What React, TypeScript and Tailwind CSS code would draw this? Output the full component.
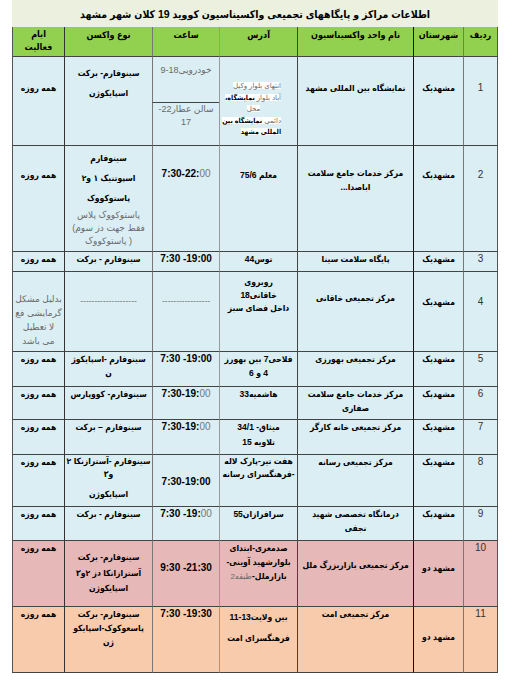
import React from 'react';

// Mashhad COVID-19 vaccination centres sheet (RTL table)

const L = ({ children }: { children: React.ReactNode }) => <span dir="ltr">{children}</span>;

const colCls = [
  'border-r border-r-[#555] border-l-[#777]', // ردیف
  'border-l-[#111]', // شهرستان
  'border-l-[#444]', // نام واحد
  'border-l-[#999]', // آدرس
  'border-l-[#777]', // ساعت
  'border-l-[#333]', // نوع واکسن
  'border-l-[#555]', // ایام
];

function Td({
  col,
  className = '',
  rowSpan,
  children,
}: {
  col: number;
  className?: string;
  rowSpan?: number;
  children?: React.ReactNode;
}) {
  return (
    <td
      rowSpan={rowSpan}
      className={`align-top p-0 text-center border-b border-l border-b-[#444] ${colCls[col]} ${className}`}
    >
      {children}
    </td>
  );
}

const Gray = ({ children, size = 'text-[9px]' }: { children: React.ReactNode; size?: string }) => (
  <span className={`font-['Liberation_Sans','DejaVu_Sans',sans-serif] font-normal text-[#6b6b6b] ${size}`}>
    {children}
  </span>
);

const Lines = ({ items, lh = 'leading-[14px]' }: { items: React.ReactNode[]; lh?: string }) => (
  <div className={lh}>
    {items.map((t, i) => (
      <div key={i}>{t}</div>
    ))}
  </div>
);

const Num = ({ children }: { children: React.ReactNode }) => (
  <span className="font-normal text-[10px] text-[#333]">{children}</span>
);

const Time = ({ children }: { children: React.ReactNode }) => (
  <span dir="ltr" className="text-[10px]">{children}</span>
);

export default function App() {
  const row = 'bg-[#daeef3]';
  return (
    <div className="w-[513px] h-[683px] bg-white px-[12px]">
      <table
        dir="rtl"
        className="w-[486px] table-fixed border-separate border-spacing-0 font-['Liberation_Sans','DejaVu_Sans_Condensed','DejaVu_Sans',sans-serif] text-[8.5px] leading-[14px] font-bold text-black"
      >
        <colgroup>
          <col className="w-[35px]" />
          <col className="w-[50px]" />
          <col className="w-[116px]" />
          <col className="w-[78px]" />
          <col className="w-[67px]" />
          <col className="w-[88px]" />
          <col className="w-[52px]" />
        </colgroup>
        <tbody>
          <tr className="h-[27px]">
            <td colSpan={7} className="bg-[#ebf1de] text-center align-middle text-[10.5px] font-bold">
              اطلاعات مراکز و پایگاههای تجمیعی واکسیناسیون کووید 19 کلان شهر مشهد
            </td>
          </tr>
          <tr className="h-[30px] bg-[#92d050] text-[9px]">
            <Td col={0} className="pt-[1px]">ردیف</Td>
            <Td col={1} className="pt-[1px]">شهرستان</Td>
            <Td col={2} className="pt-[1px]">نام واحد واکسیناسیون</Td>
            <Td col={3} className="pt-[1px]">آدرس</Td>
            <Td col={4} className="pt-[1px]">ساعت</Td>
            <Td col={5} className="pt-[1px]">نوع واکسن</Td>
            <Td col={6} className="pt-[1px]">
              <Lines items={['ایام', 'فعالیت']} lh="leading-[13px]" />
            </Td>
          </tr>

          {/* 1 */}
          <tr className={`h-[46px] ${row}`}>
            <Td col={0} rowSpan={2} className="pt-[24px]"><Num>1</Num></Td>
            <Td col={1} rowSpan={2} className="pt-[24px]">مشهدیک</Td>
            <Td col={2} rowSpan={2} className="pt-[24px]">نمایشگاه بین المللی مشهد</Td>
            <Td col={3} rowSpan={2} className="pt-[23px]">
              <div className="text-[7px] leading-[11.5px] text-right pr-[16px] whitespace-nowrap">
                <div><span className="bg-white"><Gray size="text-[7px]">انتهای بلوار وکیل</Gray></span></div>
                <div><span className="bg-white"><Gray size="text-[7px]">آباد بلوار </Gray>نمایشگاه،</span></div>
                <div className="text-center pl-[6px]"><span className="bg-white"><Gray size="text-[7px]">محل</Gray></span></div>
                <div><span className="bg-white"><Gray size="text-[7px]">دائمی </Gray>نمایشگاه بین</span></div>
                <div><span className="bg-white">المللی مشهد</span></div>
              </div>
            </Td>
            <Td col={4} className="pt-[6px]">
              <Gray>خودرویی<L>9-18</L></Gray>
            </Td>
            <Td col={5} rowSpan={2} className="pt-[6px]">
              <Lines items={['سینوفارم- برکت', 'اسپایکوژن']} lh="leading-[20px]" />
            </Td>
            <Td col={6} rowSpan={2} className="pt-[24px]">همه روزه</Td>
          </tr>
          <tr className={`h-[43px] ${row}`}>
            <Td col={4} className="pt-[0px]">
              <Gray>
                <Lines items={[<>سالن عطار<L>-22</L></>, '17']} lh="leading-[13px]" />
              </Gray>
            </Td>
          </tr>

          {/* 2 */}
          <tr className={`h-[106px] ${row}`}>
            <Td col={0} className="pt-[22px]"><Num>2</Num></Td>
            <Td col={1} className="pt-[22px]">مشهدیک</Td>
            <Td col={2} className="pt-[20px]">
              <Lines items={['مرکز خدمات جامع سلامت', 'اباصدا...']} />
            </Td>
            <Td col={3} className="pt-[22px]">معلم <L>75/6</L></Td>
            <Td col={4} className="pt-[21px]">
              <Time>7:30-22:<span className="font-normal text-[#777]">00</span></Time>
            </Td>
            <Td col={5} className="pt-[2px]">
              <Lines items={['سینوفارم', 'اسپوتنیک ۱ و۲', 'پاستوکووک']} lh="leading-[20px]" />
              <div className="mt-[1px]">
                <Gray>
                  <Lines items={['پاستوکووک پلاس', 'فقط جهت دز سوم)', '( پاستوکووک']} lh="leading-[13px]" />
                </Gray>
              </div>
            </Td>
            <Td col={6} className="pt-[22px]">همه روزه</Td>
          </tr>

          {/* 3 */}
          <tr className={`h-[20px] ${row}`}>
            <Td col={0}><Num>3</Num></Td>
            <Td col={1}>مشهدیک</Td>
            <Td col={2}>پایگاه سلامت سینا</Td>
            <Td col={3}>توس44</Td>
            <Td col={4}><Time>7:30 -19:00</Time></Td>
            <Td col={5}>سینوفارم - برکت</Td>
            <Td col={6}>همه روزه</Td>
          </tr>

          {/* 4 */}
          <tr className={`h-[80px] ${row}`}>
            <Td col={0} className="pt-[23px]"><Num>4</Num></Td>
            <Td col={1} className="pt-[23px]">مشهدیک</Td>
            <Td col={2} className="pt-[19px]">مرکز تجمیعی خاقانی</Td>
            <Td col={3} className="pt-[4px]">
              <Lines items={['روبروی', 'خاقانی18', 'داخل فضای سبز']} lh="leading-[13px]" />
            </Td>
            <Td col={4} className="pt-[22px]">
              <span className="font-normal text-[#777]">-----------------</span>
            </Td>
            <Td col={5} className="pt-[22px]">
              <span className="font-normal text-[#777]">--------------------</span>
            </Td>
            <Td col={6} className="pt-[20px]">
              <Gray>
                <Lines items={['بدلیل مشکل', 'گرمایشی فع', 'لا تعطیل', 'می باشد']} />
              </Gray>
            </Td>
          </tr>

          {/* 5 */}
          <tr className={`h-[35px] ${row}`}>
            <Td col={0}><Num>5</Num></Td>
            <Td col={1}>مشهدیک</Td>
            <Td col={2}>مرکز تجمیعی بهورزی</Td>
            <Td col={3}><Lines items={['فلاحی7 بین بهورز', '4 و 6']} /></Td>
            <Td col={4}><Time>7:30 -19:00</Time></Td>
            <Td col={5}><Lines items={['سینوفارم -اسپایکوژ', 'ن']} /></Td>
            <Td col={6}>همه روزه</Td>
          </tr>

          {/* 6 */}
          <tr className={`h-[33px] ${row}`}>
            <Td col={0}><Num>6</Num></Td>
            <Td col={1}>مشهدیک</Td>
            <Td col={2}><Lines items={['مرکز خدمات جامع سلامت', 'صفاری']} /></Td>
            <Td col={3}>هاشمیه33</Td>
            <Td col={4}>
              <Time>7:30-19:<span className="font-normal text-[#777]">00</span></Time>
            </Td>
            <Td col={5}>سینوفارم- کووپارس</Td>
            <Td col={6}>همه روزه</Td>
          </tr>

          {/* 7 */}
          <tr className={`h-[35px] ${row}`}>
            <Td col={0}><Num>7</Num></Td>
            <Td col={1}>مشهدیک</Td>
            <Td col={2}>مرکز تجمیعی خانه کارگر</Td>
            <Td col={3}><Lines items={[<>میثاق<L>34/1 -</L></>, 'تلاویه 15']} lh="leading-[15px]" /></Td>
            <Td col={4}>
              <Time>7:30-19:<span className="font-normal text-[#777]">00</span></Time>
            </Td>
            <Td col={5}>سینوفارم – برکت</Td>
            <Td col={6}>همه روزه</Td>
          </tr>

          {/* 8 */}
          <tr className={`h-[52px] ${row}`}>
            <Td col={0}><Num>8</Num></Td>
            <Td col={1}>مشهدیک</Td>
            <Td col={2}>مرکز تجمیعی رسانه</Td>
            <Td col={3}><Lines items={['هفت تیر-پارک لاله', '-فرهنگسرای رسانه']} lh="leading-[13px]" /></Td>
            <Td col={4} className="pt-[20px]"><Time>7:30-19:00</Time></Td>
            <Td col={5}>
              <Lines items={['سینوفارم -آسترازنکا ۲', 'و۳']} lh="leading-[13px]" />
              <div className="mt-[6px] leading-[14px]">اسپایکوژن</div>
            </Td>
            <Td col={6}>همه روزه</Td>
          </tr>

          {/* 9 */}
          <tr className={`h-[34px] ${row}`}>
            <Td col={0}><Num>9</Num></Td>
            <Td col={1}>مشهدیک</Td>
            <Td col={2}><Lines items={['درمانگاه تخصصی شهید', 'نجفی']} /></Td>
            <Td col={3}>سرافرازان55</Td>
            <Td col={4}>
              <Time>7:30 -19:<span className="font-normal text-[#777]">00</span></Time>
            </Td>
            <Td col={5}>سینوفارم - برکت</Td>
            <Td col={6}>همه روزه</Td>
          </tr>

          {/* 10 */}
          <tr className="h-[66px] bg-[#e6b8b7]">
            <Td col={0}><Num>10</Num></Td>
            <Td col={1} className="pt-[20px]">مشهد دو</Td>
            <Td col={2} className="pt-[17px]">مرکز تجمیعی بازاربزرگ ملل</Td>
            <Td col={3}>
              <Lines
                items={['صدمعری-ابتدای', 'بلوارشهید آوینی-', <>بازارملل-<Gray size="text-[8px]">طبقه2</Gray></>]}
              />
            </Td>
            <Td col={4} className="pt-[20px]"><Time>9:30 -21:30</Time></Td>
            <Td col={5} className="pt-[9px]">
              <Lines items={['سینوفارم- برکت', 'آسترازانکا دز ۲و۳', 'اسپایکوژن']} lh="leading-[15.5px]" />
            </Td>
            <Td col={6}>همه روزه</Td>
          </tr>

          {/* 11 */}
          <tr className="h-[66px] bg-[#f8cbad]">
            <Td col={0}><Num>11</Num></Td>
            <Td col={1} className="pt-[23px]">مشهد دو</Td>
            <Td col={2}>مرکز تجمیعی امت</Td>
            <Td col={3}><Lines items={[<>بین ولایت<L>11-13</L></>, 'فرهنگسرای امت']} lh="leading-[21px]" /></Td>
            <Td col={4}><Time>7:30 -19:30</Time></Td>
            <Td col={5}><Lines items={['سینوفارم- برکت', 'پاسعوکوک-اسپایکو', 'ژن']} /></Td>
            <Td col={6}>همه روزه</Td>
          </tr>
        </tbody>
      </table>
    </div>
  );
}
